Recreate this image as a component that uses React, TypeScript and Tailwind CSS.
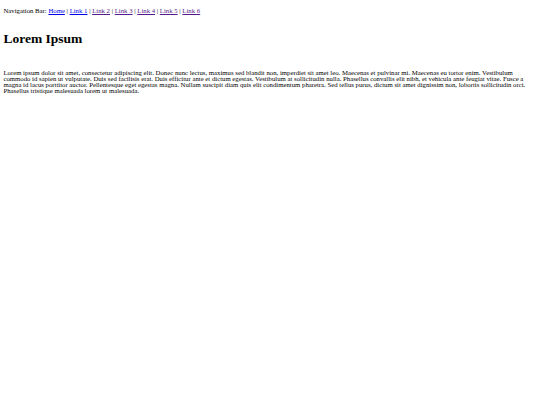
export default function App() {
  const links = ["Link 1", "Link 2", "Link 3", "Link 4", "Link 5", "Link 6"];
  return (
    <div className="min-h-[405px] bg-white px-[3.4px] text-black" style={{ fontFamily: '"Liberation Serif", "Times New Roman", serif' }}>
      <div className="pt-[6.7px] text-[6.75px] leading-[7.7px]">
        Navigation Bar:{" "}
        <a href="#" className="text-[#0000ee] underline">Home</a>
        {links.map((l, i) => (
          <span key={l}>
            {" | "}
            <a href="#" className={(i === 0 ? "text-[#0000ee]" : "text-[#551a8b]") + " underline"}>{l}</a>
          </span>
        ))}
      </div>
      <h1 className="mt-[17px] text-[13.5px] font-bold leading-[15.3px]">Lorem Ipsum</h1>
      <p className="mt-[23.8px] text-[6.75px] leading-[5.85px]">
        Lorem ipsum dolor sit amet, consectetur adipiscing elit. Donec nunc lectus, maximus sed blandit non, imperdiet sit amet leo. Maecenas et pulvinar mi. Maecenas eu tortor enim. Vestibulum commodo id sapien ut vulputate. Duis sed facilisis erat. Duis efficitur ante et dictum egestas. Vestibulum at sollicitudin nulla. Phasellus convallis elit nibh, et vehicula ante feugiat vitae. Fusce a magna id lacus porttitor auctor. Pellentesque eget egestas magna. Nullam suscipit diam quis elit condimentum pharetra. Sed tellus purus, dictum sit amet dignissim non, lobortis sollicitudin orci. Phasellus tristique malesuada lorem ut malesuada.
      </p>
    </div>
  );
}
